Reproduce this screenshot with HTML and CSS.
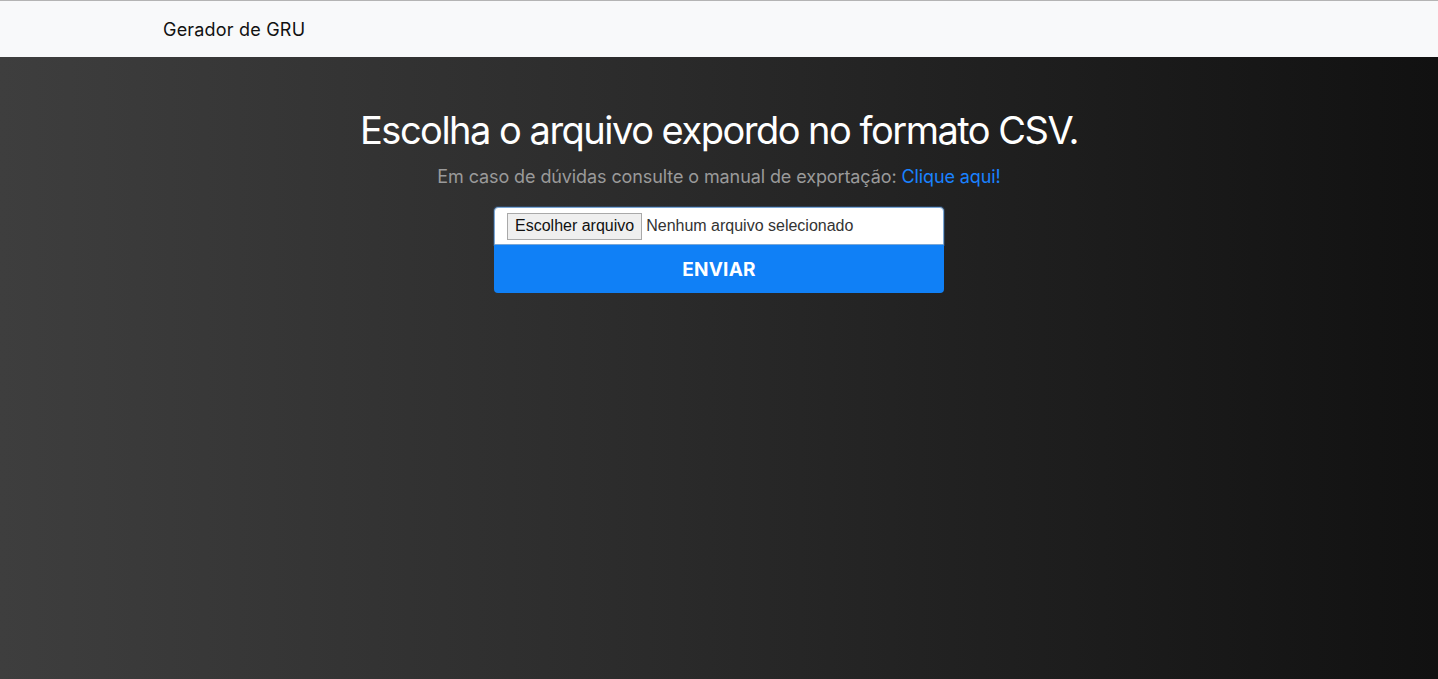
FILE: index.html
```html
<!DOCTYPE html>
<html lang="pt-BR">
<head>
<meta charset="utf-8">
<title>Gerador de GRU</title>
<link rel="stylesheet" href="styles.css">
</head>
<body>
<nav class="navbar">
  <div class="container">
    <a class="brand" href="#">Gerador de GRU</a>
  </div>
</nav>
<main class="hero">
  <h1 class="title">Escolha o arquivo expordo no formato CSV.</h1>
  <p class="lead">Em caso de dúvidas consulte o manual de exportação: <a href="#" class="link">Clique aqui!</a></p>
  <form class="upload">
    <label class="file">
      <span class="file-btn">Escolher arquivo</span>
      <span class="file-name">Nenhum arquivo selecionado</span>
    </label>
    <button type="button" class="send">ENVIAR</button>
  </form>
</main>
</body>
</html>
```
FILE: styles.css
```css
* { box-sizing: border-box; }
html, body { margin: 0; height: 100%; }
body {
  font-family: Inter, "Noto Sans", sans-serif;
  display: flex;
  flex-direction: column;
  border-top: 1px solid #b4b4b4;
}
.navbar {
  background: #f8f9fa;
  height: 56px;
  flex: none;
  display: flex;
  align-items: center;
}
.container {
  width: 1140px;
  margin: 0 auto;
  padding: 0 14px;
}
.brand {
  color: #111;
  text-decoration: none;
  font-size: 18px;
  letter-spacing: 0.2px;
}
.hero {
  flex: 1;
  background: linear-gradient(to right, #3e3e3e 0%, #2b2b2b 45%, #111111 100%);
  display: flex;
  flex-direction: column;
  align-items: center;
  padding-top: 50px;
}
.title {
  margin: 0;
  color: #fff;
  font-weight: 400;
  font-size: 38px;
  letter-spacing: -1.5px;
  line-height: 46px;
}
.lead {
  margin: 11px 0 0;
  color: #9a9a9a;
  font-size: 18px;
  letter-spacing: -0.1px;
  line-height: 26px;
}
.link { color: #1a82ff; text-decoration: none; }
.upload {
  width: 450px;
  margin-top: 17px;
  display: flex;
  flex-direction: column;
}
.file {
  height: 38px;
  background: #fff;
  border: 1px solid #7aa7d6;
  border-radius: 4px 4px 0 0;
  display: flex;
  align-items: center;
  padding-left: 12px;
  font-family: "Liberation Sans", Arial, sans-serif;
  font-size: 16px;
  box-shadow: 0 0 0 1px rgba(60,110,170,0.35);
}
.file-btn {
  background: #efefef;
  border: 1px solid #a9a9a9;
  color: #111;
  padding: 3px 7px;
  height: 27px;
  display: flex;
  align-items: center;
}
.file-name { color: #333; margin-left: 4px; }
.send {
  height: 48px;
  border: none;
  border-radius: 0 0 4px 4px;
  background: #1080f6;
  color: #fff;
  font-family: Inter, "Noto Sans", sans-serif;
  font-weight: 700;
  font-size: 19px;
  letter-spacing: 0.2px;
  cursor: pointer;
}
```
